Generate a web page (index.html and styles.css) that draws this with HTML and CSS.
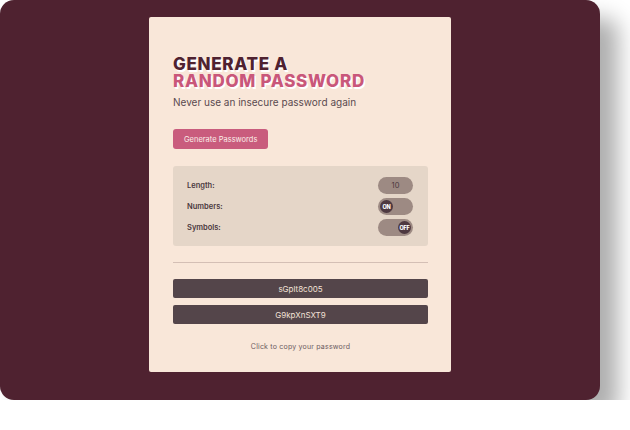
FILE: index.html
```html
<!DOCTYPE html>
<html>
<head>
<meta charset="utf-8">
<link rel="stylesheet" href="styles.css">
</head>
<body>
<div class="panel">
  <div class="card">
    <h1 class="title"><span class="t1">GENERATE A</span><span class="t2">RANDOM PASSWORD</span></h1>
    <p class="subtitle">Never use an insecure password again</p>
    <button class="gen-btn">Generate Passwords</button>
    <div class="settings">
      <div class="row"><span class="label">Length:</span><span class="pill pill-num">10</span></div>
      <div class="row"><span class="label">Numbers:</span><span class="pill"><span class="knob">ON</span></span></div>
      <div class="row"><span class="label">Symbols:</span><span class="pill pill-off"><span class="knob">OFF</span></span></div>
    </div>
    <hr class="divider">
    <div class="pw">sGplt8c005</div>
    <div class="pw">G9kpXnSXT9</div>
    <p class="hint">Click to copy your password</p>
  </div>
</div>
</body>
</html>
```
FILE: styles.css
```css
html, body { margin: 0; padding: 0; background: #ffffff; }
body { font-family: Inter, "Noto Sans", sans-serif; }
.panel {
  width: 600px; height: 400px; background: #4f2230; border-radius: 14px;
  box-shadow: 18px 18px 22px rgba(0,0,0,0.32);
  display: flex; justify-content: center; align-items: flex-start;
  padding-top: 17px; box-sizing: border-box;
}
.card {
  width: 302px; height: 355px; background: #f9e7d9; border-radius: 2px;
  box-sizing: border-box; padding: 39px 23px 0 24px;
  display: flex; flex-direction: column;
}
.title { margin: 0; font-size: 17px; font-weight: 800; line-height: 17px; letter-spacing: 0.7px; display: flex; flex-direction: column; text-shadow: 1.5px 1.5px 0 #ffffff; }
.t1 { color: #4f2230; }
.t2 { color: #c9577a; }
.subtitle { margin: 6px 0 0; font-size: 10px; color: #5a4a4f; }
.gen-btn {
  margin-top: 21px; align-self: flex-start; border: 0; border-radius: 3px;
  background: #c95c7d; color: #fbeee8; font-family: inherit; font-size: 7.5px;
  height: 20px; padding: 0 11px; white-space: nowrap;
}
.settings {
  margin-top: 17px; background: #e5d6c8; border-radius: 3px;
  padding: 11px 15px 10px 14px; display: flex; flex-direction: column; gap: 4px;
}
.row { display: flex; justify-content: space-between; align-items: center; height: 17px; }
.label { font-size: 7.5px; font-weight: 600; color: #4a383e; }
.pill {
  width: 35px; height: 17px; border-radius: 9px; background: #9d8a83;
  display: flex; align-items: center; padding: 0 2px; box-sizing: border-box;
}
.pill-num { justify-content: center; font-size: 7.5px; color: #4a383e; }
.pill-off { justify-content: flex-end; }
.knob {
  width: 13px; height: 13px; border-radius: 50%; background: #4e3940; color: #fff;
  font-size: 5.5px; font-weight: 800; display: flex; align-items: center; justify-content: center; letter-spacing: -0.2px;
}
.divider { margin: 16px 0 0; border: 0; border-top: 1px solid #d4bfb5; }
.pw {
  margin-top: 7px; height: 19px; background: #54454a; color: #f3e1d6; border-radius: 2px;
  font-size: 8px; display: flex; align-items: center; justify-content: center;
}
.divider + .pw { margin-top: 16px; }
.hint { margin: 18px 0 0; text-align: center; font-size: 7px; color: #6a5a5f; letter-spacing: 0.2px; }
```
